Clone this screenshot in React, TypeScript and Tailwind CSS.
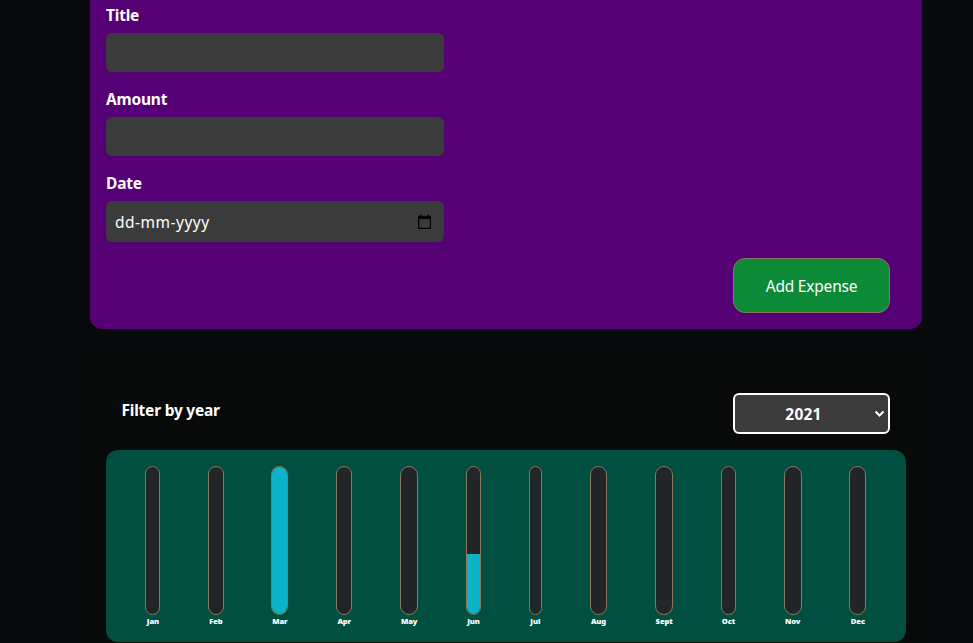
const months = [
  { label: 'Jan', width: 15, fill: 0 },
  { label: 'Feb', width: 15.2, fill: 0 },
  { label: 'Mar', width: 17, fill: 100 },
  { label: 'Apr', width: 16, fill: 0 },
  { label: 'May', width: 18, fill: 0 },
  { label: 'Jun', width: 15, fill: 41 },
  { label: 'Jul', width: 12.9, fill: 0 },
  { label: 'Aug', width: 17.7, fill: 0 },
  { label: 'Sept', width: 17.9, fill: 0 },
  { label: 'Oct', width: 15, fill: 0 },
  { label: 'Nov', width: 17.7, fill: 0 },
  { label: 'Dec', width: 16.9, fill: 0 },
];

function Field({ label, date = false }: { label: string; date?: boolean }) {
  return (
    <div className="flex flex-col">
      <label className="mb-[7px] h-[22px] pt-px text-[15.5px] leading-[21px] font-bold tracking-[-0.2px]">{label}</label>
      <div
        className={`flex w-[338px] items-center justify-between rounded-[6px] bg-[#3b3b3b] pr-[13px] pl-[9px] ${date ? 'h-[41px]' : 'h-[39px]'}`}
      >
        {date && (
          <>
            <span className="text-[15.5px] leading-[22px] tracking-[0.5px]">dd-mm-yyyy</span>
            <svg width="13" height="15" viewBox="0 0 13 15" fill="#000">
              <path fillRule="evenodd" d="M2 .5h1.3v1.3h6.4V.5H11v1.3h1q1 0 1 1V14q0 1-1 1H1q-1 0-1-1V2.8q0-1 1-1h1zM1.3 5v8.7h10.4V5z" />
            </svg>
          </>
        )}
      </div>
    </div>
  );
}

function MonthBar({ label, width, fill }: { label: string; width: number; fill: number }) {
  return (
    <div className="flex flex-col items-center" style={{ width }}>
      <div className="flex h-[149px] w-full shrink-0 flex-col justify-end overflow-hidden rounded-full border border-[#877960] bg-[#232629]">
        <div className="w-full bg-[#0bb4c9]" style={{ height: `${fill}%` }} />
      </div>
      <span className="text-[7.6px] leading-[12px] font-black tracking-[-0.1px] whitespace-nowrap">{label}</span>
    </div>
  );
}

export default function App() {
  return (
    <div className="h-[643px] overflow-hidden bg-[#090a0c] pl-[90px] font-['Noto_Sans','Open_Sans',sans-serif] text-white">
      <form className="flex h-[329px] w-[832px] flex-col rounded-b-xl bg-[#560075] px-4 pt-1">
        <div className="flex flex-col gap-4">
          <Field label="Title" />
          <Field label="Amount" />
          <Field label="Date" date />
        </div>
        <button
          type="button"
          className="mt-4 mr-4 h-[55px] w-[157px] self-end rounded-xl border border-[#877960] bg-[#0c8a37] pt-[3px] text-[15.5px] tracking-[-0.2px]"
        >
          Add Expense
        </button>
      </form>

      <section className="mt-8 h-[300px] w-[832px] rounded-xl bg-[#080a09] px-4 pt-8">
        <div className="flex h-[41px] items-center justify-between pr-4 pl-[15.5px]">
          <h2 className="pb-[7px] text-[15.5px] leading-[22px] font-bold tracking-[-0.22px]">Filter by year</h2>
          <div className="flex h-[41px] w-[157px] items-center rounded-[6px] border-2 border-white bg-[#3b3b3b] pr-[3px]">
            <span className="grow pt-[2px] pr-[2px] text-center text-[15.5px] font-bold tracking-[0.2px]">2021</span>
            <svg width="11" height="8" viewBox="0 0 11 8" fill="none" stroke="#fff" strokeWidth="2">
              <path d="m1.5 1.5 4 4 4-4" />
            </svg>
          </div>
        </div>
        <div className="mt-4 flex h-48 justify-around rounded-xl bg-[#014f40] py-4 pr-[15.6px] pl-[15.5px]">
          {months.map((month) => (
            <MonthBar key={month.label} {...month} />
          ))}
        </div>
      </section>
    </div>
  );
}
